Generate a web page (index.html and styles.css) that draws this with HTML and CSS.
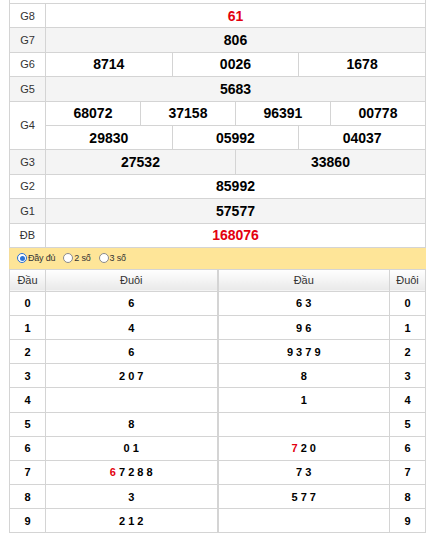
FILE: index.html
```html
<!DOCTYPE html>
<html>
<head>
<meta charset="utf-8">
<link rel="stylesheet" href="styles.css">
</head>
<body>
<div class="wrap">
  <div class="stub"></div>
  <table class="kq">
    <colgroup><col class="c-lbl"><col span="12"></colgroup>
    <tr><td class="lbl">G8</td><td colspan="12" class="num red">61</td></tr>
    <tr class="alt"><td class="lbl">G7</td><td colspan="12" class="num">806</td></tr>
    <tr><td class="lbl">G6</td><td colspan="4" class="num">8714</td><td colspan="4" class="num">0026</td><td colspan="4" class="num">1678</td></tr>
    <tr class="alt"><td class="lbl">G5</td><td colspan="12" class="num">5683</td></tr>
    <tr><td class="lbl" rowspan="2">G4</td><td colspan="3" class="num">68072</td><td colspan="3" class="num">37158</td><td colspan="3" class="num">96391</td><td colspan="3" class="num">00778</td></tr>
    <tr><td colspan="4" class="num">29830</td><td colspan="4" class="num">05992</td><td colspan="4" class="num">04037</td></tr>
    <tr class="alt"><td class="lbl">G3</td><td colspan="6" class="num">27532</td><td colspan="6" class="num">33860</td></tr>
    <tr><td class="lbl">G2</td><td colspan="12" class="num">85992</td></tr>
    <tr class="alt"><td class="lbl">G1</td><td colspan="12" class="num">57577</td></tr>
    <tr><td class="lbl">ĐB</td><td colspan="12" class="num red">168076</td></tr>
  </table>
  <div class="opts">
    <label class="opt"><span class="radio on"></span>Đầy đủ</label>
    <label class="opt"><span class="radio"></span>2 số</label>
    <label class="opt"><span class="radio"></span>3 số</label>
  </div>
  <div class="loto">
    <table class="lt">
      <colgroup><col class="c-lbl"><col></colgroup>
      <tr class="hd"><th>Đầu</th><th>Đuôi</th></tr>
      <tr><td>0</td><td>6</td></tr>
      <tr><td>1</td><td>4</td></tr>
      <tr><td>2</td><td>6</td></tr>
      <tr><td>3</td><td>2 0 7</td></tr>
      <tr><td>4</td><td></td></tr>
      <tr><td>5</td><td>8</td></tr>
      <tr><td>6</td><td>0 1</td></tr>
      <tr><td>7</td><td><span class="red">6</span> 7 2 8 8</td></tr>
      <tr><td>8</td><td>3</td></tr>
      <tr><td>9</td><td>2 1 2</td></tr>
    </table>
    <table class="lt">
      <colgroup><col><col class="c-lbl"></colgroup>
      <tr class="hd"><th>Đầu</th><th>Đuôi</th></tr>
      <tr><td>6 3</td><td>0</td></tr>
      <tr><td>9 6</td><td>1</td></tr>
      <tr><td>9 3 7 9</td><td>2</td></tr>
      <tr><td>8</td><td>3</td></tr>
      <tr><td>1</td><td>4</td></tr>
      <tr><td></td><td>5</td></tr>
      <tr><td><span class="red">7</span> 2 0</td><td>6</td></tr>
      <tr><td>7 3</td><td>7</td></tr>
      <tr><td>5 7 7</td><td>8</td></tr>
      <tr><td></td><td>9</td></tr>
    </table>
  </div>
</div>
</body>
</html>
```

FILE: styles.css
```css
html, body {
  margin: 0;
  padding: 0;
  background: #fff;
}
body {
  font-family: "Liberation Sans", Arial, sans-serif;
  color: #000;
}
.wrap {
  width: 417px;
  margin-left: 9px;
}
.stub {
  height: 3px;
  border-left: 1px solid #d4d4d4;
  border-right: 1px solid #d4d4d4;
  box-sizing: border-box;
}
table {
  border-collapse: collapse;
  table-layout: fixed;
  width: 100%;
}
td, th {
  border: 1px solid #d4d4d4;
  padding: 0;
  text-align: center;
  vertical-align: middle;
}
.c-lbl {
  width: 36px;
}
.kq tr {
  height: 24.4px;
}
.kq .alt td {
  background: #f4f4f4;
}
.lbl {
  font-size: 11px;
  color: #333;
}
.num {
  font-size: 14px;
  font-weight: bold;
  color: #000;
}
.red {
  color: #e3000f;
}
.opts {
  height: 21px;
  background: #fee598;
  display: flex;
  align-items: center;
  padding-left: 7px;
  gap: 8px;
  font-size: 9px;
  letter-spacing: -0.2px;
  color: #333;
  border-left: 1px solid #f5dd9a;
}
.opt {
  display: flex;
  align-items: center;
  gap: 1px;
}
.radio {
  width: 8px;
  height: 8px;
  border: 1px solid #8a8a8a;
  border-radius: 50%;
  background: #fff;
  display: inline-block;
  position: relative;
}
.radio.on {
  border-color: #2a6fd1;
}
.radio.on::after {
  content: "";
  position: absolute;
  left: 1.5px;
  top: 1.5px;
  width: 5px;
  height: 5px;
  border-radius: 50%;
  background: #2d74d8;
}
.loto {
  display: flex;
}
.lt {
  width: 50%;
}
.lt tr {
  height: 24.15px;
}
.lt .hd {
  height: 22px;
}
.lt th {
  font-weight: normal;
  font-size: 11px;
  color: #333;
  background: linear-gradient(#ffffff, #e9e9e9);
}
.lt td {
  font-size: 11px;
  font-weight: bold;
}
```
